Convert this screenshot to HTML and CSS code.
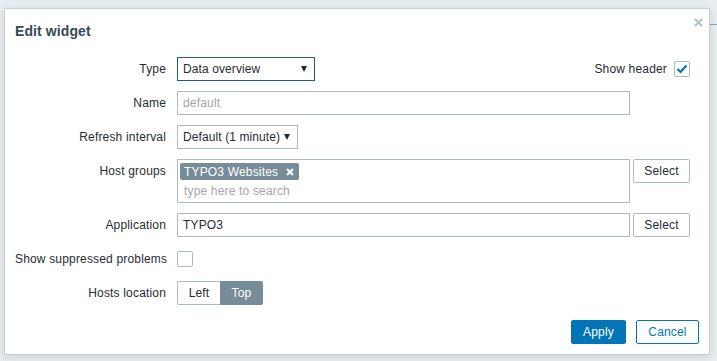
FILE: index.html
```html
<!DOCTYPE html>
<html lang="en">

<head>
    <meta charset="UTF-8">
    <meta name="viewport" content="width=device-width, initial-scale=1.0">
    <title>Edit widget</title>
    <link rel="stylesheet" href="styles.css">
</head>

<body>
    <div class="backdrop-line"></div>

    <div class="dialog">
        <div class="dialog-header">
            <h4>Edit widget</h4>
            <button class="close-btn" title="Close">
                <svg width="9" height="9" viewBox="0 0 9 9">
                    <path d="M1 1L8 8M8 1L1 8" stroke="#b2bec5" stroke-width="2" />
                </svg>
            </button>
        </div>

        <form class="form-grid">
            <label class="form-label">Type</label>
            <div class="form-field split">
                <div class="select select-type focused">
                    <span>Data overview</span>
                    <i class="arrow"></i>
                </div>
                <div class="inline-check">
                    <span>Show header</span>
                    <span class="checkbox checked">
                        <svg width="12" height="10" viewBox="0 0 12 10">
                            <path d="M1.5 5L4.5 8L10.5 1.5" fill="none" stroke="#0275b8" stroke-width="2.2" />
                        </svg>
                    </span>
                </div>
            </div>

            <label class="form-label">Name</label>
            <div class="form-field">
                <input class="text-input" type="text" placeholder="default">
            </div>

            <label class="form-label">Refresh interval</label>
            <div class="form-field">
                <div class="select select-refresh">
                    <span>Default (1 minute)</span>
                    <i class="arrow"></i>
                </div>
            </div>

            <label class="form-label">Host groups</label>
            <div class="form-field">
                <div class="multiselect">
                    <div class="tag">
                        <span>TYPO3 Websites</span>
                        <svg width="8" height="8" viewBox="0 0 8 8">
                            <path d="M1 1L7 7M7 1L1 7" stroke="#fff" stroke-width="2" />
                        </svg>
                    </div>
                    <div class="ms-search">type here to search</div>
                </div>
                <button type="button" class="btn-grey">Select</button>
            </div>

            <label class="form-label">Application</label>
            <div class="form-field">
                <input class="text-input" type="text" value="TYPO3">
                <button type="button" class="btn-grey">Select</button>
            </div>

            <label class="form-label">Show suppressed problems</label>
            <div class="form-field center">
                <span class="checkbox"></span>
            </div>

            <label class="form-label">Hosts location</label>
            <div class="form-field">
                <div class="radio-seg">
                    <span class="seg">Left</span>
                    <span class="seg active">Top</span>
                </div>
            </div>
        </form>

        <div class="dialog-footer">
            <button class="btn-apply">Apply</button>
            <button class="btn-cancel">Cancel</button>
        </div>
    </div>
</body>

</html>
```

FILE: styles.css
```css
* {
    box-sizing: border-box;
}

body {
    margin: 0;
    padding: 8px 0 0 4px;
    background-color: #eaedef;
    font-family: 'Liberation Sans', Arial, sans-serif;
    font-size: 12px;
    letter-spacing: 0.17px;
    color: #1f2c33;
    height: 361px;
    overflow: hidden;
}

/* a bit of the page behind the overlay */
.backdrop-line {
    position: absolute;
    top: 24px;
    right: 0;
    width: 8px;
    height: 1px;
    background-color: #7fa6c2;
}

.dialog {
    position: relative;
    width: 706px;
    height: 347px;
    background-color: #fff;
    border: 1px solid #c5ced4;
    box-shadow: 0 2px 8px rgba(0, 0, 0, 0.12);
    display: flex;
    flex-direction: column;
}

.dialog-header {
    display: flex;
    justify-content: space-between;
    padding: 14px 5px 0 10px;
}

.dialog-header h4 {
    margin: 0;
    font-size: 14px;
    line-height: 16px;
    font-weight: bold;
    letter-spacing: 0.1px;
    color: #374a57;
}

.close-btn {
    border: 0;
    background: none;
    padding: 0;
    margin-top: -7px;
    width: 12px;
    height: 12px;
    line-height: 0;
}

.form-grid {
    display: grid;
    grid-template-columns: 151px 1fr;
    column-gap: 11px;
    row-gap: 10px;
    margin-top: 18px;
    padding: 0 19px 0 10px;
}

.form-label {
    text-align: right;
    line-height: 24px;
    white-space: nowrap;
}

.form-field {
    display: flex;
    gap: 3px;
    align-items: flex-start;
}

.form-field.split {
    justify-content: space-between;
}

.form-field.center {
    align-items: center;
    height: 24px;
}

.select {
    display: flex;
    align-items: center;
    justify-content: space-between;
    height: 24px;
    padding: 0 7px 0 5px;
    border: 1px solid #acbbc2;
    background-color: #fff;
    white-space: nowrap;
}

.select span {
    letter-spacing: 0.1px;
}

.select.focused {
    border-color: #1f5c88;
}

.select-type {
    width: 138px;
}

.select-refresh {
    width: 121px;
}

.arrow {
    flex: none;
    width: 0;
    height: 0;
    border-left: 3px solid transparent;
    border-right: 3px solid transparent;
    border-top: 6px solid #1f2c33;
}

.inline-check {
    display: flex;
    align-items: center;
    gap: 7px;
    height: 24px;
}

.checkbox {
    display: inline-flex;
    align-items: center;
    justify-content: center;
    width: 16px;
    height: 16px;
    border: 1px solid #acbbc2;
    border-radius: 2px;
    background-color: #fff;
}

.text-input {
    width: 453px;
    height: 24px;
    margin: 0;
    padding: 0 5px;
    border: 1px solid #acbbc2;
    font-family: inherit;
    font-size: 12px;
    letter-spacing: inherit;
    color: #1f2c33;
}

.text-input::placeholder {
    color: #a6a6a6;
}

.multiselect {
    width: 453px;
    height: 44px;
    border: 1px solid #acbbc2;
    padding: 3px 2px 0;
}

.tag {
    display: inline-flex;
    align-items: center;
    gap: 8px;
    height: 17px;
    padding: 0 5px 0 4px;
    border-radius: 2px;
    background-color: #768d99;
    color: #fff;
}

.ms-search {
    margin: 2px 0 0 4px;
    line-height: 18px;
    color: #a6a6a6;
}

.btn-grey {
    width: 57px;
    height: 24px;
    border: 1px solid #acbbc2;
    border-radius: 2px;
    background-color: #fff;
    font-family: inherit;
    font-size: 12px;
    letter-spacing: inherit;
    color: #1f2c33;
    padding: 0;
}

.radio-seg {
    display: flex;
    height: 24px;
}

.seg {
    width: 43px;
    line-height: 22px;
    text-align: center;
    border: 1px solid #acbbc2;
}

.seg:first-child {
    border-radius: 2px 0 0 2px;
    border-right: 0;
}

.seg.active {
    border-color: #768d99;
    border-radius: 0 2px 2px 0;
    background-color: #768d99;
    color: #fff;
}

.dialog-footer {
    display: flex;
    justify-content: flex-end;
    gap: 10px;
    margin-top: 15px;
    padding: 0 10px;
}

.dialog-footer button {
    height: 24px;
    padding: 0;
    border-radius: 2px;
    font-family: inherit;
    font-size: 12px;
    letter-spacing: inherit;
}

.btn-apply {
    width: 55px;
    border: 1px solid #0275b8;
    background-color: #0275b8;
    color: #fff;
}

.btn-cancel {
    width: 63px;
    border: 1px solid #0275b8;
    background-color: #fff;
    color: #0275b8;
}
```
